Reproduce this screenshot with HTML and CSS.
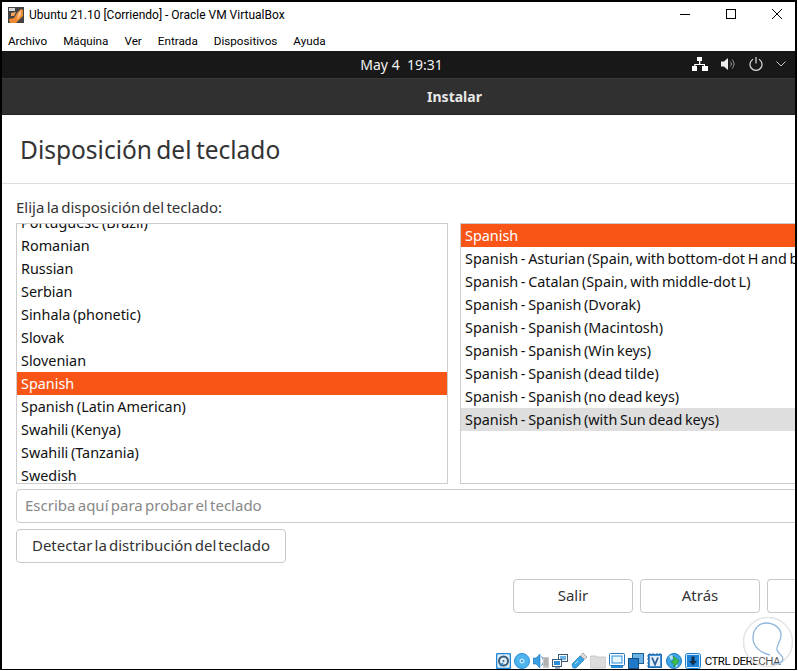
FILE: index.html
```html
<!DOCTYPE html>
<html lang="es">
<head>
<meta charset="utf-8">
<title>Ubuntu 21.10 [Corriendo] - Oracle VM VirtualBox</title>
<link rel="stylesheet" href="styles.css">
</head>
<body>
<div class="window">
  <div class="titlebar">
    <svg class="vbox" width="16" height="16" viewBox="0 0 16 16"><rect width="16" height="16" fill="#444"/><rect x="1" y="1" width="6" height="3" fill="#d8d8d8"/><path d="M1 12 L6 11 L9 6 L13 2 L15 3 L15 9 L10 14 L8 16 L2 16 Z" fill="#f08a30"/><path d="M3 6 L8 5 L6 9 L3 9 Z" fill="#f6a860"/><path d="M10 6 L13 3 L13 8 L9 13 Z" fill="#fbc08a"/></svg>
    <span class="wintitle">Ubuntu 21.10 [Corriendo] - Oracle VM VirtualBox</span>
    <div class="winctrls">
      <svg width="46" height="30" viewBox="0 0 46 30"><path d="M18 14.500H28" stroke="#000" fill="none"/></svg>
      <svg width="46" height="30" viewBox="0 0 46 30"><rect x="18.500" y="9.500" width="9" height="9" stroke="#000" fill="none"/></svg>
      <svg width="46" height="30" viewBox="0 0 46 30"><path d="M18 9L28 19M28 9L18 19" stroke="#000" fill="none"/></svg>
    </div>
  </div>
  <div class="menubar">
    <span>Archivo</span><span>Máquina</span><span>Ver</span><span>Entrada</span><span>Dispositivos</span><span>Ayuda</span>
  </div>
  <div class="guest">
    <div class="topbar">
      <span class="clock">May 4&nbsp; 19:31</span>
      <div class="tray">
        <svg width="16" height="14" viewBox="0 0 16 14"><path d="M5 0h5v4H5zM0 9h5v5H0zM10 9h6v5h-6zM7 4h1.300v3H13v2h-1.200V8H3.500v1H2.200V7H7z" fill="#fff"/></svg>
        <svg width="15" height="14" viewBox="0 0 15 14"><path d="M0 4.500h3L7 1v12L3 9.500H0z" fill="#eee"/><path d="M9 4.500a3 3 0 0 1 0 5M11 2.500a6 6 0 0 1 0 9" stroke="#999" fill="none"/></svg>
        <svg width="14" height="14" viewBox="0 0 14 14"><path d="M4 2.200a6 6 0 1 0 6 0M7 0v6.500" stroke="#ddd" stroke-width="1.200" fill="none"/></svg>
        <svg width="10" height="6" viewBox="0 0 10 6"><path d="M0.500 0.500L5 5L9.500 0.500" stroke="#ccc" fill="none"/></svg>
      </div>
    </div>
    <div class="headerbar">Instalar</div>
    <div class="installer">
      <h1 class="heading">Disposición del teclado</h1>
      <div class="body">
        <div class="label">Elija la disposición del teclado:</div>
        <div class="lists">
          <ul class="list list-left">
            <li>Portuguese (Brazil)</li>
            <li>Romanian</li>
            <li>Russian</li>
            <li>Serbian</li>
            <li>Sinhala (phonetic)</li>
            <li>Slovak</li>
            <li>Slovenian</li>
            <li class="selected">Spanish</li>
            <li>Spanish (Latin American)</li>
            <li>Swahili (Kenya)</li>
            <li>Swahili (Tanzania)</li>
            <li>Swedish</li>
          </ul>
          <ul class="list list-right">
            <li class="selected">Spanish</li>
            <li>Spanish - Asturian (Spain, with bottom-dot H and bottom-dot L)</li>
            <li>Spanish - Catalan (Spain, with middle-dot L)</li>
            <li>Spanish - Spanish (Dvorak)</li>
            <li>Spanish - Spanish (Macintosh)</li>
            <li>Spanish - Spanish (Win keys)</li>
            <li>Spanish - Spanish (dead tilde)</li>
            <li>Spanish - Spanish (no dead keys)</li>
            <li class="hover">Spanish - Spanish (with Sun dead keys)</li>
          </ul>
        </div>
        <div class="field">Escriba aquí para probar el teclado</div>
        <button class="btn btn-detect">Detectar la distribución del teclado</button>
        <div class="actions">
          <button class="btn btn-nav">Salir</button>
          <button class="btn btn-nav">Atrás</button>
          <button class="btn btn-nav btn-cut"></button>
        </div>
      </div>
    </div>
  </div>
  <div class="statusbar">
    <svg class="ico" width="15" height="16" viewBox="0 0 15 16"><rect x="0.500" y="0.500" width="14" height="15" rx="2" fill="#dff0fb" stroke="#1f86d8" stroke-width="1.500"/><circle cx="7.500" cy="8" r="4.500" fill="none" stroke="#3c5a74" stroke-width="2"/><circle cx="7.500" cy="8" r="1" fill="#3c5a74"/><path d="M4 13l3-3" stroke="#1f86d8" stroke-width="1.500"/></svg>
    <svg class="ico" width="16" height="16" viewBox="0 0 16 16"><circle cx="8" cy="8" r="7.500" fill="#4db4ee" stroke="#2a8fd8"/><circle cx="8" cy="8" r="2.500" fill="#bfe4f8"/><circle cx="8" cy="8" r="1" fill="#1f86d8"/></svg>
    <svg class="ico" width="16" height="16" viewBox="0 0 16 16"><path d="M0 5h3l4-4v14l-4-4H0z" fill="#3a9ee0" stroke="#1f78c0" stroke-width="0.600"/><path d="M8.500 3.500a6 6 0 0 1 0 9" stroke="#1f78c0" fill="none"/><path d="M10 4h6v11h-6z" fill="#c8c8c8"/><path d="M11 6h4M11 8h4M11 10h4M11 12h4" stroke="#999"/></svg>
    <svg class="ico" width="16" height="16" viewBox="0 0 16 16"><rect x="6.500" y="1.500" width="9" height="7" fill="#fff" stroke="#3c5a74"/><rect x="8" y="3" width="6" height="4" fill="#6cb4e6"/><rect x="0.500" y="6.500" width="9" height="7" fill="#fff" stroke="#3c5a74"/><rect x="2" y="8" width="6" height="4" fill="#2a8fd8"/><path d="M3 15h5" stroke="#3c5a74"/></svg>
    <svg class="ico" width="16" height="16" viewBox="0 0 16 16"><path d="M1 11L9 3l4 4-8 8H2z" fill="#3aa6e6" stroke="#1f78c0" stroke-width="0.700"/><path d="M10.500 1.500L12 0l4 4-1.500 1.500-1 1-4-4z" fill="#ddd" stroke="#888" stroke-width="0.700"/><path d="M4 11l3-3" stroke="#bfe4f8"/></svg>
    <svg class="ico" width="16" height="16" viewBox="0 0 16 16"><path d="M0 4l1-1h5l1 1h8l1 1v9l-1 1H1l-1-1z" fill="#dcdcdc" stroke="#c8c8c8"/></svg>
    <svg class="ico" width="16" height="16" viewBox="0 0 16 16"><rect x="0.500" y="0.500" width="15" height="12" rx="1" fill="#fff" stroke="#1f78c0"/><rect x="3" y="3" width="10" height="7" fill="#e6f4fc" stroke="#2a8fd8"/><rect x="2" y="13" width="12" height="2" fill="#2a8fd8"/></svg>
    <svg class="ico" width="16" height="16" viewBox="0 0 16 16"><rect x="4.500" y="0.500" width="11" height="10" fill="#6cb4e6" stroke="#1f5f98"/><rect x="0.500" y="5.500" width="10" height="10" fill="#1f78c8" stroke="#174f80"/></svg>
    <svg class="ico" width="16" height="16" viewBox="0 0 16 16"><rect x="1" y="1" width="14" height="14" fill="#1f6fb4"/><path d="M3 0v16M6 0v16M10 0v16M13 0v16M0 3h16M0 6h16M0 10h16M0 13h16" stroke="#1f6fb4" stroke-dasharray="1 1"/><rect x="2.500" y="2.500" width="11" height="11" fill="#e4eef8" stroke="#4a90d0"/><path d="M5 4.500L8 11.500L11 4.500" stroke="#2a5f98" stroke-width="1.800" fill="none"/></svg>
    <svg class="ico" width="16" height="16" viewBox="0 0 16 16"><circle cx="8" cy="8" r="7.500" fill="#3aa6e6" stroke="#1f78c0"/><path d="M3 3l3-1 2 3-3 2zM9 11l3 1-2 3z" fill="#bfe4f8"/><path d="M7 3l6 5-5 6v-3L5 9l3-2z" fill="#3fc04a" stroke="#1f8030" stroke-width="0.600"/></svg>
    <svg class="ico" width="16" height="16" viewBox="0 0 16 16"><rect x="0.500" y="0.500" width="15" height="15" rx="2" fill="#cfe8fa" stroke="#1f7fd0"/><rect x="2" y="2" width="12" height="12" fill="#1f84d8"/><path d="M6.500 3.500h3V8H12L8 12.500 4 8h2.500z" fill="#14304c"/></svg>
    <span class="hostkey">CTRL DERECHA</span>
    <svg class="watermark" width="54" height="54" viewBox="0 0 54 54"><circle cx="25" cy="25" r="24.500" fill="#fff" fill-opacity="0.300" stroke="#e4e4e4" stroke-width="1.500"/><path d="M27 38C18 36 10 30 10 21C10 12 16 6 23 6C31 6 38 11 38 18C38 25 33 28 34 33C35 37 40 38 40 42C39 46 35 48 30 46" fill="none" stroke="#8db6dc" stroke-width="1.300"/></svg>
  </div>
</div>
</body>
</html>
```

FILE: styles.css
```css
* { box-sizing: border-box; }
html, body { margin: 0; padding: 0; }
body { width: 798px; height: 671px; overflow: hidden; background: #fff; }
ul { list-style: none; margin: 0; padding: 0; }

.window {
  width: 797px; height: 670px; display: flex; flex-direction: column;
  background: #fff; border-top: 2px solid #000; border-left: 2px solid #000; border-right: 2px solid #000; border-bottom: 1px solid #000;
  overflow: hidden;
}

.titlebar { height: 27px; flex: none; display: flex; align-items: center; padding: 0 0 2px 6px; font-family: Roboto, "Liberation Sans", sans-serif; color: #000; }
.vbox { flex: none; }
.wintitle { margin-left: 5px; font-size: 12px; }
.winctrls { margin-left: auto; display: flex; align-self: flex-start; margin-right: -5px; margin-top: -2px; }
.winctrls svg { display: block; }

.menubar { height: 22px; flex: none; display: flex; gap: 16px; align-items: center; padding: 1px 0 0 6px; font: 11.700px Roboto, "Liberation Sans", sans-serif; color: #000; }

.guest { flex: 1; display: flex; flex-direction: column; min-height: 0; font-family: "Noto Sans", "Open Sans", sans-serif; }

.topbar { height: 27px; flex: none; background: #181818; position: relative; display: flex; align-items: center; justify-content: center; color: #f2f2f2; font-size: 14px; }
.clock { margin-left: 6px; }
.tray { position: absolute; right: 9px; top: 6px; display: flex; align-items: center; gap: 13px; height: 14px; }
.tray svg { display: block; }

.headerbar { height: 37px; flex: none; background: #303030; border-top: 1px solid #3a3a3a; border-bottom: 1px solid #222; color: #e8e8e8; font-size: 14px; font-weight: 700; display: flex; align-items: center; justify-content: center; padding-left: 112px; }

.installer { flex: 1; min-height: 0; display: flex; flex-direction: column; color: #111; }
.heading { margin: 0; height: 69px; flex: none; border-bottom: 1px solid #ddd; padding: 17px 0 0 18px; font-size: 24.500px; font-weight: 400; line-height: 36px; color: #333; word-spacing: -2px; }

.body { padding: 13px 0 0 14px; flex: 1; min-height: 0; }
.label { font-size: 15px; word-spacing: -1.600px; line-height: 20px; color: #333; height: 26px; }

.lists { display: flex; gap: 12px; height: 261px; }
.list { border: 1px solid #ccc; overflow: hidden; font-size: 14.400px; word-spacing: -1.100px; }
.list li { height: 23px; line-height: 23px; padding-left: 4px; white-space: nowrap; color: #111; }
.list-left { width: 432px; flex: none; }
.list-left li:first-child { margin-top: -13px; }
.list-right { width: 340px; flex: none; border-right: 0; }
.selected.selected { background: #f95517; color: #fff; }
.hover.hover { background: #dedede; }

.field { margin-top: 5px; width: 790px; height: 34px; border: 1px solid #ccc; border-radius: 4px; padding-left: 8px; line-height: 30px; font-size: 15px; word-spacing: -1.600px; color: #888; }

.btn { display: block; background: #fff; border: 1px solid #c8c8c8; border-radius: 4px; font: 15px "Noto Sans", "Open Sans", sans-serif; word-spacing: -1.800px; color: #333; padding: 0 0 2px; height: 34px; }
.btn-detect { margin-top: 6px; width: 270px; }

.actions { display: flex; gap: 7px; margin: 16px 0 0 497px; }
.btn-nav { width: 120px; flex: none; }
.btn-cut { width: 60px; border-right: 0; border-radius: 4px 0 0 4px; }

.statusbar { height: 19px; flex: none; position: relative; display: flex; align-items: flex-end; justify-content: flex-end; gap: 3px; padding-right: 15px; margin-top: auto; font: 11.500px/16px Roboto, "Liberation Sans", sans-serif; letter-spacing: -0.500px; color: #000; background: #fff; }
.ico { flex: none; display: block; }
.hostkey { margin-left: 1px; }
.watermark { position: absolute; right: -2px; bottom: -2px; }
```
